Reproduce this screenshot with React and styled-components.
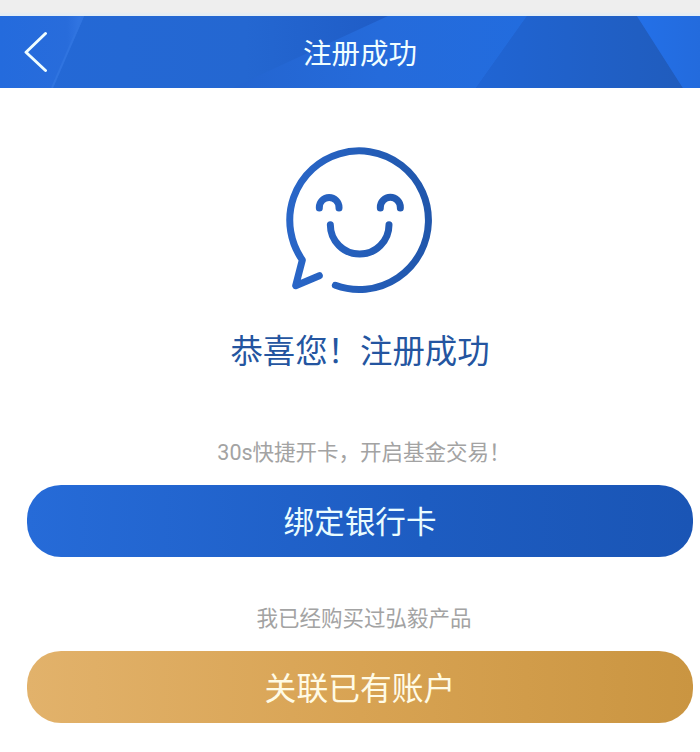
import React from "react";
import styled, { createGlobalStyle } from "styled-components";

export default function App() {
  return (
    <>
      <GlobalStyle />
      <Page>
        <StatusBar />
        <Header>
          <HeaderBackground />
          <BackButton aria-label="返回">
            <svg width="24" height="42" viewBox="0 0 24 42" fill="none">
              <path
                d="M21.5 2.5L2 21.2L21.5 39.5"
                stroke="#f0feff"
                strokeWidth="2.9"
                strokeLinecap="round"
                strokeLinejoin="round"
              />
            </svg>
          </BackButton>
          <HeaderTitle>注册成功</HeaderTitle>
        </Header>
        <Content>
          <SmileIcon />
          <Message>恭喜您！注册成功</Message>
          <Hint>30s快捷开卡，开启基金交易！</Hint>
          <BlueButton>绑定银行卡</BlueButton>
          <Hint>我已经购买过弘毅产品</Hint>
          <GoldButton>关联已有账户</GoldButton>
        </Content>
      </Page>
    </>
  );
}

// 헤더 배경의 다각형 무늬
function HeaderBackground() {
  return (
    <Pattern viewBox="0 0 700 72" preserveAspectRatio="none">
      <defs>
        <linearGradient id="base" x1="0" x2="1">
          <stop offset="0" stopColor="#2469d7" />
          <stop offset="0.35" stopColor="#2467d1" />
          <stop offset="0.56" stopColor="#1f5cc6" />
          <stop offset="1" stopColor="#2068dd" />
        </linearGradient>
        <linearGradient id="left" x1="0" x2="1">
          <stop offset="0" stopColor="#246bdd" />
          <stop offset="0.8" stopColor="#286cdb" />
          <stop offset="1" stopColor="#3478e4" />
        </linearGradient>
        <linearGradient id="middle" x1="0" x2="1">
          <stop offset="0" stopColor="#2465d0" />
          <stop offset="0.5" stopColor="#256bdb" />
          <stop offset="1" stopColor="#226cde" />
        </linearGradient>
        <linearGradient id="dark" x1="0" x2="1">
          <stop offset="0" stopColor="#2065d4" />
          <stop offset="1" stopColor="#205cbd" />
        </linearGradient>
        <linearGradient id="right" x1="0" x2="1">
          <stop offset="0" stopColor="#2370e8" />
          <stop offset="1" stopColor="#236bdd" />
        </linearGradient>
      </defs>
      <rect width="700" height="72" fill="url(#base)" />
      <path d="M0 0H84L53 72H0Z" fill="url(#left)" />
      <path d="M83 0L52 72" stroke="#3074e0" strokeWidth="2" />
      <path d="M232 72L388 0H527L476 72Z" fill="url(#middle)" />
      <path d="M527 0H637L683 72H476Z" fill="url(#dark)" />
      <path d="M637 0H700V72H683Z" fill="url(#right)" />
    </Pattern>
  );
}

function SmileIcon() {
  return (
    <Smile viewBox="0 0 540 510" fill="none">
      <defs>
        <linearGradient
          id="smile"
          gradientUnits="userSpaceOnUse"
          x1="51"
          y1="0"
          x2="489"
          y2="0"
        >
          <stop offset="0" stopColor="#2966c8" />
          <stop offset="1" stopColor="#2056ab" />
        </linearGradient>
      </defs>
      <g
        stroke="url(#smile)"
        strokeWidth="21"
        strokeLinecap="round"
        strokeLinejoin="round"
      >
        <path d="M148 419L77 449L97 372A208 208 0 1 1 196 448" />
        <path d="M148 216V214A29.5 29.5 0 0 1 207 214V216" />
        <path d="M331 216V214A30 30 0 0 1 391 214V216" />
        <path d="M181 266A88 88 0 0 0 357 266" />
      </g>
    </Smile>
  );
}

const GlobalStyle = createGlobalStyle`
  body {
    margin: 0;
    background: #ffffff;
    overflow: hidden;
    font-family: Roboto, "Noto Sans CJK SC", sans-serif;
  }
`;

const Page = styled.div`
  width: 700px;
  height: 752px;
  overflow: hidden;
  background: #ffffff;
`;

const StatusBar = styled.div`
  height: 16px;
  background: linear-gradient(#eeeeee 0 12px, #e4edf4 14px);
`;

const Header = styled.header`
  position: relative;
  display: grid;
  grid-template-columns: 64px 1fr 44px;
  align-items: center;
  height: 72px;
`;

const Pattern = styled.svg`
  position: absolute;
  inset: 0;
  width: 100%;
  height: 100%;
`;

const BackButton = styled.button`
  z-index: 1;
  display: flex;
  padding: 0 0 0 24px;
  border: none;
  background: none;
  cursor: pointer;
`;

const HeaderTitle = styled.h1`
  z-index: 1;
  margin: 0;
  padding-top: 5px;
  color: #f0feff;
  font-size: 28.5px;
  font-weight: 400;
  line-height: 40px;
  text-align: center;
`;

// 왼쪽 여백이 20px 더 넓은 중앙 정렬
const Content = styled.main`
  display: flex;
  flex-direction: column;
  align-items: center;
  padding: 48px 7px 0 27px;
`;

const Smile = styled.svg`
  display: block;
  width: 180px;
  height: 170px;
`;

const Message = styled.h2`
  margin: 22px 0 0;
  color: #2455a0;
  font-size: 32.4px;
  font-weight: 400;
  line-height: 48px;
  white-space: nowrap;
`;

const Hint = styled.p`
  margin: 61px 0 16px;
  padding-left: 8px;
  color: #a3a3a3;
  font-size: 21.5px;
  font-weight: 400;
  line-height: 32px;
  white-space: nowrap;
`;

const Button = styled.button`
  width: 100%;
  height: 72px;
  padding: 3px 0 0;
  border: none;
  border-radius: 34px;
  font-family: inherit;
  font-weight: 400;
  line-height: 69px;
  cursor: pointer;

  & + ${Hint} {
    margin-top: 46px;
  }
`;

const BlueButton = styled(Button)`
  background: linear-gradient(90deg, #266bd8, #1d5cc1 60%, #1a55b5);
  color: #eafdff;
  font-size: 30.6px;
`;

const GoldButton = styled(Button)`
  padding-top: 4px;
  background: linear-gradient(90deg, #e2b26b, #d8a353 50%, #ca9541);
  color: #fffbe6;
  font-size: 31.8px;
`;
